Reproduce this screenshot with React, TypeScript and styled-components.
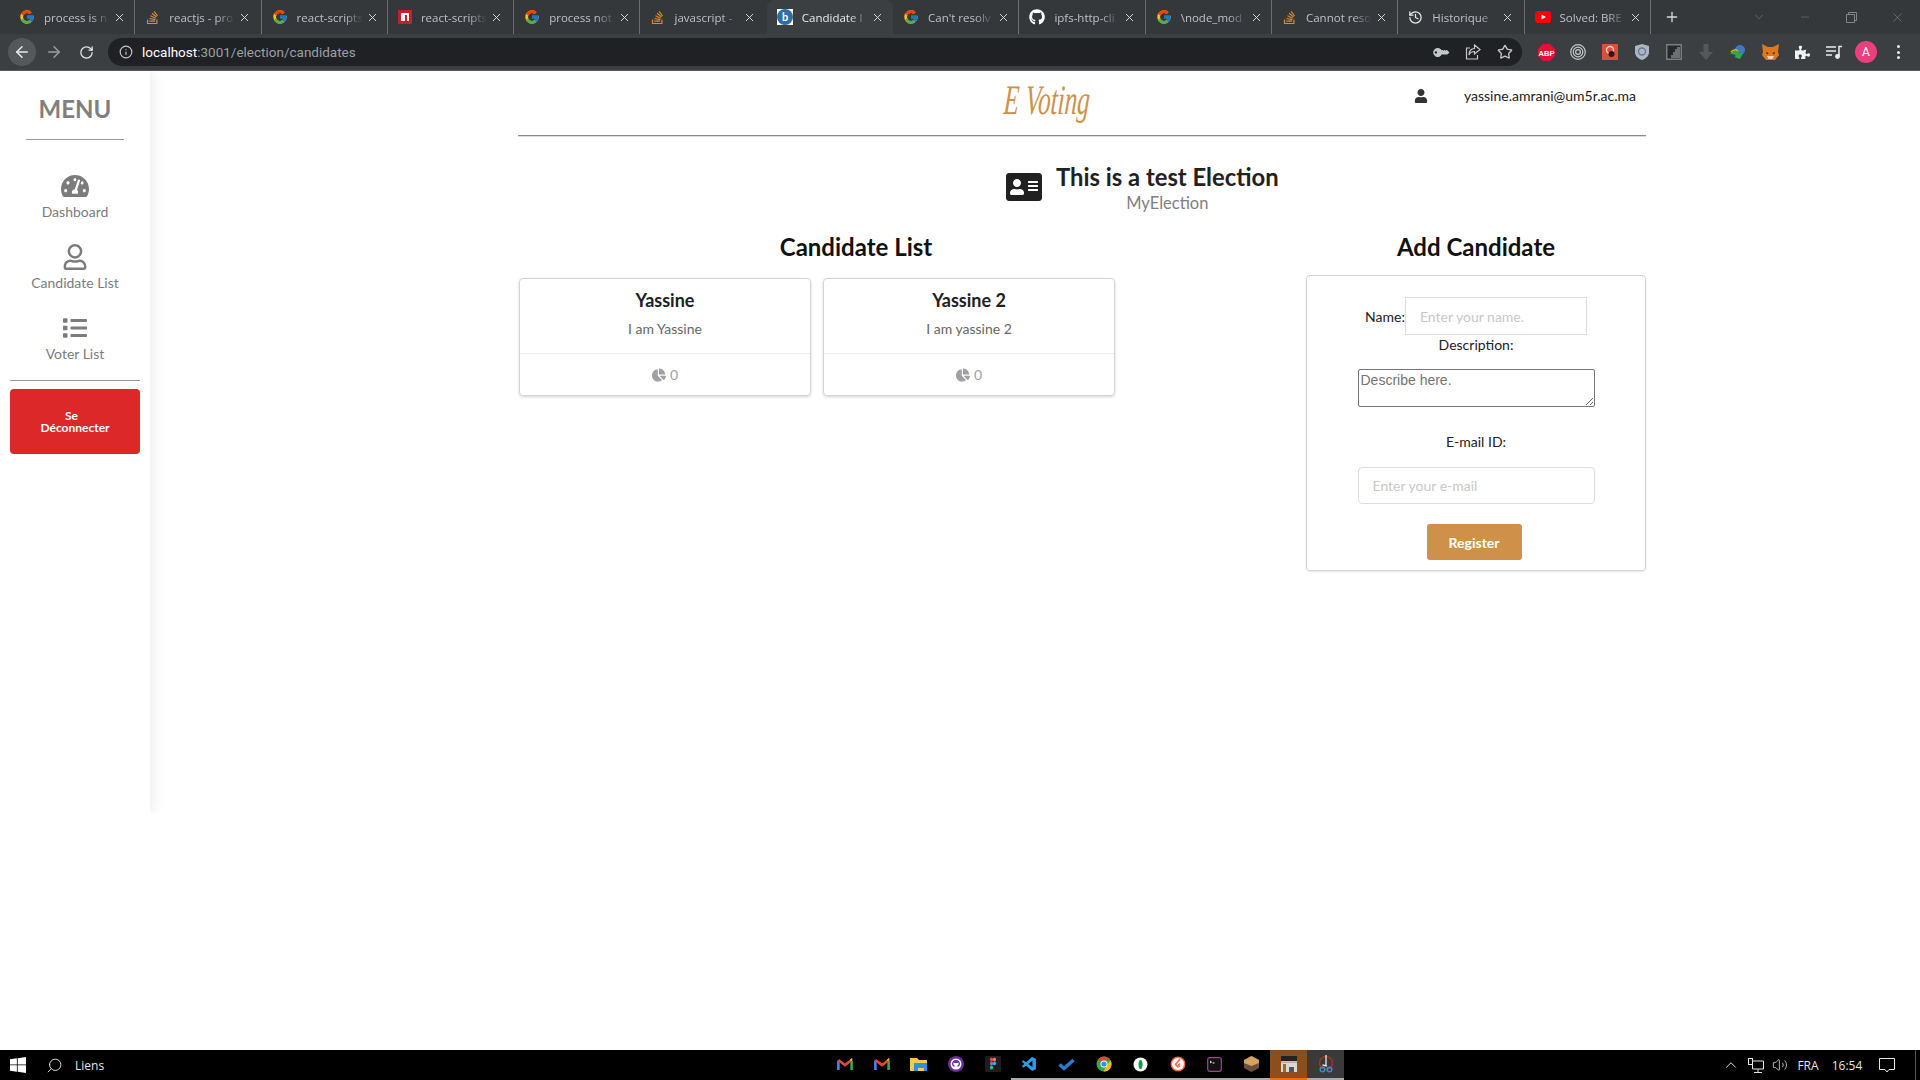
import React from 'react';
import styled, { createGlobalStyle } from 'styled-components';
import { FcGoogle } from 'react-icons/fc';
import {
  FaAddressCard, FaChartPie, FaGithub, FaKey, FaList, FaPuzzlePiece, FaRegUser,
  FaStackOverflow, FaTachometerAlt, FaUser,
} from 'react-icons/fa';
import { VscVscode } from 'react-icons/vsc';
import { ArrowLeft, ArrowRight, ChevronDown, ChevronUp, History, Info, Minus, Plus, RotateCw, Search, Star, Volume2, X } from 'lucide-react';

const GlobalStyle = createGlobalStyle`
  html, body { margin: 0; padding: 0; background: #fff; }
  * { box-sizing: border-box; }
  body { font-family: Lato, "Liberation Sans", sans-serif; color: #212121; }
`;

const Page = styled.div`
  width: 1920px;
  height: 1080px;
  display: flex;
  flex-direction: column;
  overflow: hidden;
`;

/* browser chrome */
const TabStrip = styled.div`
  height: 34px;
  background: #35383b;
  display: flex;
  padding-left: 9px;
  font-family: "Open Sans", sans-serif;
`;

const Tab = styled.div<{ $active?: boolean; $plain?: boolean }>`
  width: 126.3px;
  height: 34px;
  display: flex;
  align-items: center;
  padding-left: 10px;
  gap: 9px;
  color: ${p => (p.$active ? '#e8eaed' : '#bdc1c6')};
  background: ${p => (p.$active ? '#3c3f42' : 'transparent')};
  border-radius: ${p => (p.$active ? '8px 8px 0 0' : '0')};
  border-right: 1px solid ${p => (p.$active || p.$plain ? 'transparent' : '#6a6d70')};
  font-size: 11.5px;
  position: relative;
  svg { flex: none; }
`;

const TabTitle = styled.span`
  width: 66px;
  overflow: hidden;
  white-space: nowrap;
  -webkit-mask-image: linear-gradient(90deg, #000 72%, transparent);
  mask-image: linear-gradient(90deg, #000 72%, transparent);
`;

const TabClose = styled(X)`
  margin-left: -6px;
  color: #d8dade;
`;

const NewTab = styled.div`
  width: 40px;
  padding-left: 13px;
  display: flex;
  align-items: center;
  color: #d5d7da;
`;

const WindowControls = styled.div`
  margin-left: auto;
  display: flex;
  align-items: center;
  color: #84878a;
`;

const WindowControl = styled.div`
  width: 46px;
  display: flex;
  justify-content: center;
`;

const Toolbar = styled.div`
  height: 37px;
  background: #3c3f42;
  border-bottom: 1px solid #5a5a5a;
  display: flex;
  align-items: flex-start;
  padding: 4px 0 0 8px;
  color: #e8eaed;
`;

const NavButton = styled.div<{ $dim?: boolean; $round?: boolean }>`
  width: 28px;
  height: 28px;
  margin-right: 4px;
  border-radius: 50%;
  display: flex;
  align-items: center;
  justify-content: center;
  color: ${p => (p.$dim ? '#9a9da0' : '#e8eaed')};
  background: ${p => (p.$round ? '#55585b' : 'transparent')};
`;

const Omnibox = styled.div`
  width: 1414px;
  height: 28px;
  margin-left: 4px;
  border-radius: 14px;
  background: #202124;
  display: flex;
  align-items: center;
  padding: 0 9px 0 11px;
  color: #c4c7ca;
`;

const Url = styled.div`
  margin-left: 9px;
  font: 13.5px Roboto, sans-serif;
  color: #9aa0a6;
  b { color: #fff; font-weight: 400; }
`;

const OmniboxIcons = styled.div`
  margin-left: auto;
  display: flex;
  align-items: center;
  gap: 16px;
`;

const KeyIcon = styled(FaKey)`
  transform: rotate(-135deg);
  margin-right: 2px;
`;

const Extensions = styled.div`
  flex: 1;
  display: flex;
  align-items: center;
  height: 28px;
  padding-left: 8px;
`;

const ExtSlot = styled.div`
  width: 32px;
  display: flex;
  justify-content: center;
  align-items: center;
`;

const Avatar = styled.div`
  width: 22px;
  height: 22px;
  border-radius: 50%;
  background: #e8417c;
  color: #fff;
  font: 12px Roboto, sans-serif;
  display: flex;
  align-items: center;
  justify-content: center;
`;

const Dots = styled.div`
  display: flex;
  flex-direction: column;
  gap: 2.5px;
  i { width: 3px; height: 3px; border-radius: 50%; background: #e8eaed; }
`;

/* app */
const Body = styled.div`
  flex: 1;
  display: flex;
  align-items: flex-start;
  background: #fff;
  min-height: 0;
`;

const Sidebar = styled.aside`
  width: 150px;
  height: 742px;
  flex: none;
  box-shadow: 2px 0 14px rgba(0, 0, 0, 0.09);
  clip-path: inset(0 -30px 0 0);
  padding: 20px 10px 0;
  display: flex;
  flex-direction: column;
  align-items: center;
`;

const MenuTitle = styled.div`
  width: 98px;
  height: 49px;
  border-bottom: 1px solid #9a9a9a;
  text-align: center;
  font-size: 24px;
  font-weight: 700;
  line-height: 36px;
  color: #7f7f7f;
`;

const MenuItem = styled.div`
  height: 71px;
  display: flex;
  flex-direction: column;
  align-items: center;
  color: #7c7c7c;
  font-size: 14px;
  span { margin-top: 3px; line-height: 20px; }
  svg { height: 26px; }
`;

const MenuList = styled.nav`
  margin-top: 33px;
  display: flex;
  flex-direction: column;
  width: 100%;
`;

const SideDivider = styled.div`
  width: 130px;
  height: 1px;
  margin-top: -6px;
  background: #999;
`;

const LogoutButton = styled.button`
  width: 130px;
  height: 65px;
  margin-top: 8px;
  padding: 0 30px;
  border: 0;
  border-radius: 4px;
  background: #dc2828;
  color: #fff;
  font: 700 12px/12px Lato, sans-serif;
  span { display: block; margin-right: 7px; }
`;

const Main = styled.main`
  width: 1128px;
  margin-left: 368px;
`;

const Header = styled.header`
  height: 65px;
  border-bottom: 1px solid #8a8a8a;
  box-shadow: 0 1px 0 #ddd;
  display: flex;
  align-items: flex-start;
  padding: 0 10px 0 486px;
`;

const Logo = styled.div`
  margin-top: 4px;
  font: italic 400 42px/50px "Liberation Serif", serif;
  color: #cf9149;
  transform: scaleX(0.6) skewX(-6deg);
  transform-origin: left center;
  white-space: nowrap;
  width: 95px;
`;

const UserBox = styled.div`
  margin-left: auto;
  height: 49px;
  display: flex;
  align-items: center;
  font-size: 14px;
  color: #212121;
  gap: 36px;
`;

const TitleRow = styled.div`
  display: flex;
  align-items: center;
  padding: 20px 0 0 488px;
  gap: 14px;
  height: 85px;
`;

const TitleIcon = styled(FaAddressCard)`
  margin-bottom: 4px;
`;

const TitleText = styled.div`
  text-align: center;
  h1 { margin: 0; font-size: 23.8px; line-height: 29px; font-weight: 700; color: #212121; }
  p { margin: 0; font-size: 16.5px; line-height: 22px; color: #808080; font-weight: 400; }
`;

const Columns = styled.div`
  display: grid;
  grid-template-columns: 676px 340px;
  column-gap: 112px;
  margin-top: 1px;
`;

const SectionTitle = styled.h2`
  margin: 0;
  height: 50px;
  line-height: 50px;
  text-align: center;
  font-size: 24px;
  font-weight: 700;
  color: #111;
`;

const CardRow = styled.div`
  display: flex;
  gap: 12px;
  padding-left: 1px;
  margin-top: 6px;
`;

const Card = styled.div`
  width: 292px;
  height: 118px;
  border: 1px solid #d4d4d5;
  border-radius: 4px;
  box-shadow: 0 1px 3px #d4d4d5;
  display: flex;
  flex-direction: column;
`;

const CardContent = styled.div`
  height: 75px;
  padding-top: 9px;
  text-align: center;
  border-bottom: 1px solid #eee;
  h3 { margin: 0; font-size: 18px; line-height: 24px; font-weight: 700; color: #212121; }
  p { margin: 7px 0 0; font-size: 14px; line-height: 20px; color: #666; }
`;

const CardExtra = styled.div`
  flex: 1;
  display: flex;
  align-items: center;
  justify-content: center;
  gap: 4px;
  font-size: 14px;
  color: #a0a0a0;
`;

const FormCard = styled.form`
  height: 296px;
  margin-top: 3px;
  border: 1px solid #d4d4d5;
  border-radius: 4px;
  box-shadow: 0 1px 2px #e4e4e4;
  padding-top: 21px;
  display: flex;
  flex-direction: column;
  align-items: center;
  font-size: 14px;
  color: #212121;
`;

const NameRow = styled.label`
  display: flex;
  align-items: center;
`;

const NameInput = styled.input`
  width: 182px;
  height: 38px;
  padding: 0 14px;
  border: 1px solid #ddd;
  border-radius: 0;
  background: #fff;
  font: 14px Lato, sans-serif;
  &::placeholder { color: #c8c8c8; opacity: 1; }
`;

const FieldLabel = styled.div<{ $gap: number }>`
  margin-top: ${p => p.$gap}px;
  line-height: 20px;
`;

const DescArea = styled.textarea`
  display: block;
  width: 237px;
  height: 38px;
  margin: 14px 0 0;
  padding: 2px;
  border: 1px solid #767676;
  border-radius: 2px;
  background: #fff;
  font: 14px "Liberation Sans", sans-serif;
  &::placeholder { color: #757575; opacity: 1; }
`;

const MailInput = styled.input`
  width: 237px;
  height: 37px;
  margin-top: 15px;
  padding: 0 14px;
  border: 1px solid #ddd;
  border-radius: 4px;
  font: 14px Lato, sans-serif;
  &::placeholder { color: #c8c8c8; opacity: 1; }
`;

const RegisterButton = styled.button`
  width: 95px;
  height: 36px;
  margin: 20px 0 0 -4px;
  border: 0;
  border-radius: 3px;
  background: #cf914a;
  color: #fff;
  font: 700 14px Lato, sans-serif;
`;

/* windows taskbar */
const Taskbar = styled.footer`
  height: 30px;
  background: #000;
  display: flex;
  align-items: center;
  color: #e6e6e6;
  font: 12px "Open Sans", sans-serif;
`;

const StartArea = styled.div`
  width: 826px;
  height: 30px;
  display: flex;
  align-items: center;
  padding-left: 10px;
  gap: 20px;
`;

const SearchLabel = styled.div`
  display: flex;
  align-items: center;
  gap: 12px;
`;

const SearchIcon = styled(Search)`
  transform: scaleX(-1);
`;

const TaskIcon = styled.div<{ $state?: 'open' | 'active' | 'hover' }>`
  width: 37px;
  height: 30px;
  display: flex;
  align-items: center;
  justify-content: center;
  border-bottom: 2px solid ${p => (p.$state === 'active' ? '#f76a00' : p.$state ? '#aaa' : 'transparent')};
  background: ${p => (p.$state === 'active' ? '#8b4f1e' : p.$state === 'hover' ? '#3a3a3a' : 'transparent')};
`;

const Tray = styled.div`
  margin-left: auto;
  height: 30px;
  display: flex;
  align-items: center;
`;

const TraySlot = styled.div<{ $w: number }>`
  width: ${p => p.$w}px;
  height: 30px;
  display: flex;
  align-items: center;
  justify-content: center;
`;

const ShowDesktop = styled.div`
  height: 30px;
  margin-left: 10px;
  border-left: 1px solid #555;
  width: 5px;
`;

const Gmail = () => (
  <svg width="16" height="14" viewBox="0 0 16 13" fill="none" strokeWidth="2.6">
    <path d="M1.4 12.5V3" stroke="#4285f4" />
    <path d="M14.6 12.5V3" stroke="#34a853" />
    <path d="M1.4 2.4 8 7.6l6.6-5.2" stroke="#ea4335" />
    <path d="M13.6 1.6l1.4 1" stroke="#fbbc04" />
  </svg>
);

const Folder = () => (
  <svg width="17" height="15" viewBox="0 0 17 15">
    <path d="M0 1h7l2 2h8v11H0z" fill="#f6c94d" />
    <path d="M4 6h13v8h-3v-3H8v3H4z" fill="#2f8fe0" />
  </svg>
);

const GithubDesktop = () => (
  <svg width="16" height="16" viewBox="0 0 16 16">
    <circle cx="8" cy="8" r="8" fill="#6a2d96" />
    <circle cx="8" cy="8" r="5.5" fill="#fff" />
    <path d="M8 4c-2.4 0-4 1.7-4 3.8 0 1.7 1 2.8 2.6 3.3V9.6c-1-.3-1.4-1.2-1.2-3l1.2.4h2.8l1.2-.4c.2 1.8-.2 2.7-1.2 3v1.5C11 10.6 12 9.5 12 7.8 12 5.7 10.4 4 8 4z" fill="#6a2d96" />
  </svg>
);

const Figma = () => (
  <svg width="16" height="16" viewBox="0 0 16 16">
    <rect width="16" height="16" fill="#1e1e1e" />
    <rect x="5" y="1.5" width="3" height="4" rx="1.5" fill="#f24e1e" />
    <rect x="8" y="1.5" width="3" height="4" rx="1.5" fill="#ff7262" />
    <rect x="5" y="5.5" width="3" height="4" rx="1.5" fill="#a259ff" />
    <circle cx="9.5" cy="7.5" r="1.7" fill="#1abcfe" />
    <rect x="5" y="9.5" width="3" height="4" rx="1.5" fill="#0acf83" />
  </svg>
);

const Check = () => (
  <svg width="17" height="13" viewBox="0 0 17 13" fill="none">
    <path d="M1.5 6.5 6 10.5 15.5 2" stroke="#2b7cd3" strokeWidth="3.4" />
  </svg>
);

const Chrome = () => (
  <svg width="16" height="16" viewBox="0 0 16 16">
    <circle cx="8" cy="8" r="7.5" fill="#34a853" />
    <path d="M8 .5a7.5 7.5 0 0 1 6.5 3.75H8L4 6 2.3 3.2A7.5 7.5 0 0 1 8 .5z" fill="#ea4335" />
    <path d="M14.5 4.25A7.5 7.5 0 0 1 7.5 15.5L11 9z" fill="#fbbc04" />
    <circle cx="8" cy="8" r="3.5" fill="#fff" />
    <circle cx="8" cy="8" r="2.6" fill="#4285f4" />
  </svg>
);

const Compass = () => (
  <svg width="15" height="15" viewBox="0 0 15 15">
    <circle cx="7.5" cy="7.5" r="7" fill="#fff" />
    <ellipse cx="7.5" cy="7.5" rx="2" ry="4.5" fill="#139a4a" />
  </svg>
);

const Kraken = () => (
  <svg width="16" height="16" viewBox="0 0 16 16" fill="none">
    <circle cx="8" cy="8" r="7.5" fill="#f4693f" />
    <circle cx="8" cy="8" r="6" fill="#fff" />
    <path d="M10 3 5.5 8.5l3 3M10 7.5l-1.5 1.5 1.5 1.5" stroke="#f4693f" strokeWidth="1.6" />
  </svg>
);

const Terminal = () => (
  <svg width="15" height="15" viewBox="0 0 15 15" fill="none">
    <rect x=".7" y=".7" width="13.6" height="13.6" rx="2" fill="#111" stroke="#a0448c" strokeWidth="1.2" />
    <path d="M3 4l1.5 1L3 6" stroke="#eee" />
    <path d="M5.5 6h2" stroke="#eee" />
  </svg>
);

const Box = () => (
  <svg width="15" height="16" viewBox="0 0 15 16">
    <path d="M7.5 0 15 4v8l-7.5 4L0 12V4z" fill="#6a5040" />
    <path d="M7.5 0 15 4v3l-7.5 3L0 7V4z" fill="#d8a160" />
  </svg>
);

const Kaaba = () => (
  <svg width="16" height="16" viewBox="0 0 16 16">
    <rect y="0" width="16" height="5" fill="#222" />
    <rect y="5" width="16" height="1.5" fill="#e0c070" />
    <rect y="6.5" width="16" height="9.5" fill="#d8d8d8" />
    <rect x="2" y="8" width="3" height="8" fill="#a06a20" />
    <rect x="8" y="11" width="5" height="5" fill="#555" />
  </svg>
);

const Scissors = () => (
  <svg width="14" height="18" viewBox="0 0 14 18" fill="none">
    <circle cx="7" cy="8" r="6.5" stroke="#a8321e" strokeWidth="1.4" />
    <path d="M7 0v11M3.5 10 8 11" stroke="#ddd" strokeWidth="1.4" />
    <circle cx="3.5" cy="14.5" r="2.3" stroke="#2a8fe0" strokeWidth="1.5" />
    <circle cx="10.5" cy="14.5" r="2.3" stroke="#2a8fe0" strokeWidth="1.5" />
  </svg>
);

const Windows = () => (
  <svg width="16" height="16" viewBox="0 0 16 16" fill="#fff">
    <path d="M0 2.3 6.9 1.3v6.2H0zM7.7 1.2 16 0v7.5H7.7zM0 8.3h6.9v6.4L0 13.7zM7.7 8.3H16V16l-8.3-1.2z" />
  </svg>
);

const NpmIcon = () => (
  <svg width="14" height="14" viewBox="0 0 14 14">
    <rect width="14" height="14" fill="#c12127" />
    <path d="M3 3h8v8H9V5H7v6H3z" fill="#fff" />
  </svg>
);

const BadgeB = () => (
  <svg width="16" height="16" viewBox="0 0 16 16">
    <rect width="16" height="16" fill="#fff" />
    <circle cx="8" cy="8" r="8" fill="#2f6ea5" />
    <text x="8" y="12" textAnchor="middle" fontFamily="Lato" fontWeight="700" fontSize="11" fill="#fff">b</text>
  </svg>
);

const Youtube = () => (
  <svg width="16" height="16" viewBox="0 0 16 16">
    <rect y="2" width="16" height="12" rx="3" fill="#f00" />
    <path d="M6.5 5.5v5L11 8z" fill="#fff" />
  </svg>
);

const Abp = () => (
  <svg width="17" height="17" viewBox="0 0 17 17">
    <path d="M5 0h7l5 5v7l-5 5H5l-5-5V5z" fill="#e5103a" />
    <text x="8.5" y="11.5" textAnchor="middle" fontFamily="Liberation Sans" fontWeight="700" fontSize="7.5" fill="#fff">ABP</text>
  </svg>
);

const Rings = () => (
  <svg width="16" height="16" viewBox="0 0 16 16" fill="none" stroke="#c4c7ca">
    <circle cx="8" cy="8" r="7.3" strokeWidth="1.2" />
    <circle cx="8" cy="8" r="4.8" strokeWidth="1.2" />
    <circle cx="8" cy="8" r="2.4" strokeWidth="1.2" />
  </svg>
);

const Bug = () => (
  <svg width="16" height="16" viewBox="0 0 16 16">
    <rect width="16" height="16" fill="#d9503a" />
    <circle cx="8" cy="6" r="3.5" fill="none" stroke="#f5c8c0" strokeWidth="1.4" />
    <circle cx="9.5" cy="10" r="3" fill="#2a1a18" />
  </svg>
);

const Shield = () => (
  <svg width="14" height="16" viewBox="0 0 14 16">
    <path d="M7 0l7 2v6c0 4-3 6.5-7 8-4-1.5-7-4-7-8V2z" fill="#aab6c6" />
    <circle cx="7" cy="7.5" r="3.5" fill="none" stroke="#6d7a8c" strokeWidth="1.4" />
  </svg>
);

const Meter = () => (
  <svg width="16" height="16" viewBox="0 0 16 16">
    <rect width="16" height="16" fill="#7d7d7d" />
    <rect x="1.5" y="1.5" width="13" height="13" fill="#26282a" />
    <path d="M5 14V11h2V8h2V5h2V3h3v11z" fill="#6d6f70" />
  </svg>
);

const DownArrow = () => (
  <svg width="14" height="16" viewBox="0 0 14 16">
    <path d="M4.5 0h5v8H14l-7 8-7-8h4.5z" fill="#55585b" />
  </svg>
);

const Globe = () => (
  <svg width="17" height="16" viewBox="0 0 17 16">
    <circle cx="10" cy="6" r="5" fill="#3f78c4" />
    <path d="M0 10c3-4 7-4 10 0l3-1-3 6-6-2 2-1c-2-2-4-2-6-2z" fill="#2fa84f" />
    <path d="M1 8c3-3 5-3 7-1" stroke="#e4b72c" fill="none" strokeWidth="1.5" />
  </svg>
);

const Fox = () => (
  <svg width="17" height="16" viewBox="0 0 17 16">
    <path d="M0 0l6 3h5l6-3-1 8 1 3-4 5H4l-4-5 1-3z" fill="#e2761b" />
    <path d="M5 12h7l-1.5 3h-4z" fill="#e8d6c4" />
    <path d="M4 8l2.5 1L5 10.5zM13 8l-2.5 1 1.5 1.5z" fill="#2b1d12" />
  </svg>
);

const Queue = () => (
  <svg width="16" height="14" viewBox="0 0 16 14" fill="none" stroke="#e8eaed" strokeWidth="1.5">
    <path d="M0 2h10M0 6h10M0 10h6M13 11V1.5h3" />
    <circle cx="11.5" cy="11.5" r="1.7" fill="#e8eaed" />
  </svg>
);

const ShareBox = () => (
  <svg width="16" height="16" viewBox="0 0 16 16" fill="none" stroke="#c4c7ca" strokeWidth="1.2">
    <path d="M5 4H1.5v11h11v-4" />
    <path d="M9.5 1 15 5.5 9.5 10V7.5C7 7.5 5 8.5 4 11c0-4 2-6.5 5.5-6.5z" />
  </svg>
);

const Network = () => (
  <svg width="16" height="15" viewBox="0 0 16 15" fill="none" stroke="#e6e6e6">
    <path d="M3.5 3H15.5V11H4.5V7M10 11v3M6 14.5h8" />
    <rect x=".5" y=".5" width="4" height="6" fill="#000" />
  </svg>
);

const Restore = () => (
  <svg width="11" height="11" viewBox="0 0 11 11" fill="none" stroke="#84878a">
    <path d="M.5 2.5h8v8h-8zM2.5 2.5v-2h8v8h-2" />
  </svg>
);

const Notification = () => (
  <svg width="16" height="15" viewBox="0 0 16 15" fill="none" stroke="#e6e6e6">
    <path d="M.5.5h15v11H10l-2 2.5-2-2.5H.5z" />
  </svg>
);

const tabs = [
  { title: 'process is n', icon: <FcGoogle size={16} /> },
  { title: 'reactjs - pro', icon: <FaStackOverflow size={15} color="#d88a3a" /> },
  { title: 'react-scripts', icon: <FcGoogle size={16} /> },
  { title: 'react-scripts', icon: <NpmIcon /> },
  { title: 'process not', icon: <FcGoogle size={16} /> },
  { title: 'javascript -', icon: <FaStackOverflow size={15} color="#d88a3a" /> },
  { title: 'Candidate l', icon: <BadgeB />, active: true },
  { title: "Can't resolv", icon: <FcGoogle size={16} /> },
  { title: 'ipfs-http-cli', icon: <FaGithub size={16} color="#fff" /> },
  { title: '\\node_mod', icon: <FcGoogle size={16} /> },
  { title: 'Cannot reso', icon: <FaStackOverflow size={15} color="#d88a3a" /> },
  { title: 'Historique', icon: <History size={15} color="#e8eaed" /> },
  { title: 'Solved: BRE', icon: <Youtube /> },
];

const taskIcons: { el: React.ReactNode; state?: 'open' | 'active' | 'hover' }[] = [
  { el: <Gmail /> },
  { el: <Gmail /> },
  { el: <Folder /> },
  { el: <GithubDesktop /> },
  { el: <Figma /> },
  { el: <VscVscode size={17} color="#2b9fe6" />, state: 'open' },
  { el: <Check />, state: 'open' },
  { el: <Chrome />, state: 'open' },
  { el: <Compass />, state: 'open' },
  { el: <Kraken />, state: 'open' },
  { el: <Terminal />, state: 'open' },
  { el: <Box />, state: 'open' },
  { el: <Kaaba />, state: 'active' },
  { el: <Scissors />, state: 'hover' },
];

const candidates = [
  { name: 'Yassine', about: 'I am Yassine' },
  { name: 'Yassine 2', about: 'I am yassine 2' },
];

export default function App() {
  return (
    <Page>
      <GlobalStyle />
      <TabStrip>
        {tabs.map((t, i) => (
          <Tab key={i} $active={t.active} $plain={i === 5}>
            {t.icon}
            <TabTitle>{t.title}</TabTitle>
            <TabClose size={13} strokeWidth={1.8} />
          </Tab>
        ))}
        <NewTab><Plus size={16} /></NewTab>
        <WindowControls>
          <WindowControl><ChevronDown size={14} strokeWidth={1} /></WindowControl>
          <WindowControl><Minus size={12} strokeWidth={1} /></WindowControl>
          <WindowControl><Restore /></WindowControl>
          <WindowControl><X size={15} strokeWidth={1} /></WindowControl>
        </WindowControls>
      </TabStrip>
      <Toolbar>
        <NavButton $round><ArrowLeft size={18} /></NavButton>
        <NavButton $dim><ArrowRight size={18} /></NavButton>
        <NavButton><RotateCw size={15} /></NavButton>
        <Omnibox>
          <Info size={14} />
          <Url><b>localhost</b>:3001/election/candidates</Url>
          <OmniboxIcons>
            <KeyIcon size={13} />
            <ShareBox />
            <Star size={16} />
          </OmniboxIcons>
        </Omnibox>
        <Extensions>
          <ExtSlot><Abp /></ExtSlot>
          <ExtSlot><Rings /></ExtSlot>
          <ExtSlot><Bug /></ExtSlot>
          <ExtSlot><Shield /></ExtSlot>
          <ExtSlot><Meter /></ExtSlot>
          <ExtSlot><DownArrow /></ExtSlot>
          <ExtSlot><Globe /></ExtSlot>
          <ExtSlot><Fox /></ExtSlot>
          <ExtSlot><FaPuzzlePiece size={15} color="#f1f3f4" /></ExtSlot>
          <ExtSlot><Queue /></ExtSlot>
          <ExtSlot><Avatar>A</Avatar></ExtSlot>
          <ExtSlot><Dots><i /><i /><i /></Dots></ExtSlot>
        </Extensions>
      </Toolbar>

      <Body>
        <Sidebar>
          <MenuTitle>MENU</MenuTitle>
          <MenuList>
            <MenuItem><FaTachometerAlt size={28} /><span>Dashboard</span></MenuItem>
            <MenuItem><FaRegUser size={24} /><span>Candidate List</span></MenuItem>
            <MenuItem><FaList size={24} /><span>Voter List</span></MenuItem>
          </MenuList>
          <SideDivider />
          <LogoutButton type="button"><span>Se</span>Déconnecter</LogoutButton>
        </Sidebar>

        <Main>
          <Header>
            <Logo>E Voting</Logo>
            <UserBox>
              <FaUser size={14} color="#333" />
              <span>yassine.amrani@um5r.ac.ma</span>
            </UserBox>
          </Header>
          <TitleRow>
            <TitleIcon size={36} color="#212121" />
            <TitleText>
              <h1>This is a test Election</h1>
              <p>MyElection</p>
            </TitleText>
          </TitleRow>
          <Columns>
            <section>
              <SectionTitle>Candidate List</SectionTitle>
              <CardRow>
                {candidates.map(c => (
                  <Card key={c.name}>
                    <CardContent>
                      <h3>{c.name}</h3>
                      <p>{c.about}</p>
                    </CardContent>
                    <CardExtra><FaChartPie size={14} /> 0</CardExtra>
                  </Card>
                ))}
              </CardRow>
            </section>
            <section>
              <SectionTitle>Add Candidate</SectionTitle>
              <FormCard>
                <NameRow>
                  Name:<NameInput placeholder="Enter your name." />
                </NameRow>
                <FieldLabel $gap={0}>Description:</FieldLabel>
                <DescArea placeholder="Describe here." />
                <FieldLabel $gap={25}>E-mail ID:</FieldLabel>
                <MailInput placeholder="Enter your e-mail" />
                <RegisterButton type="button">Register</RegisterButton>
              </FormCard>
            </section>
          </Columns>
        </Main>
      </Body>

      <Taskbar>
        <StartArea>
          <Windows />
          <SearchLabel>
            <SearchIcon size={17} strokeWidth={1.3} />
            <span>Liens</span>
          </SearchLabel>
        </StartArea>
        {taskIcons.map((t, i) => (
          <TaskIcon key={i} $state={t.state}>{t.el}</TaskIcon>
        ))}
        <Tray>
          <TraySlot $w={24}><ChevronUp size={18} strokeWidth={1.3} /></TraySlot>
          <TraySlot $w={26}><Network /></TraySlot>
          <TraySlot $w={22}><Volume2 size={16} strokeWidth={1.2} /></TraySlot>
          <TraySlot $w={34}>FRA</TraySlot>
          <TraySlot $w={44}>16:54</TraySlot>
          <TraySlot $w={36}><Notification /></TraySlot>
          <ShowDesktop />
        </Tray>
      </Taskbar>
    </Page>
  );
}
